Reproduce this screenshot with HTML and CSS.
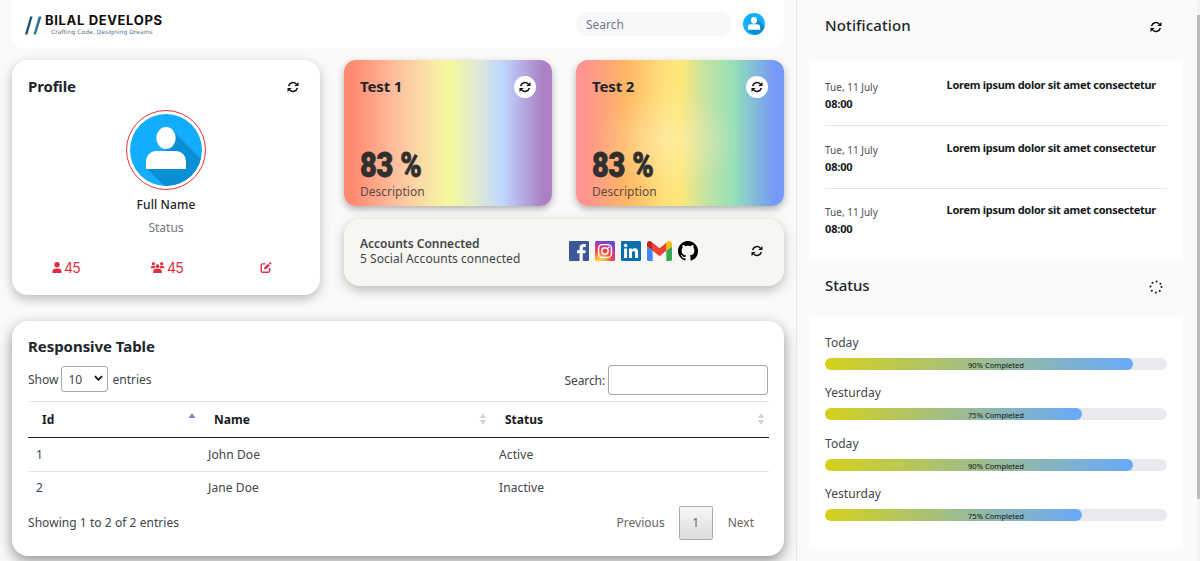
FILE: index.html
```html
<!DOCTYPE html>
<html lang="en">
<head>
  <meta charset="UTF-8" />
  <meta name="viewport" content="width=device-width, initial-scale=1.0"/>
  <title>Dashboard</title>
  <link rel="stylesheet" href="styles.css">
</head>
<body>
  <!-- shared icons -->
  <svg class="sprite" aria-hidden="true">
    <symbol id="refresh" viewBox="0 0 24 24">
      <path d="M3.2 10.2A9 9 0 0 1 18.6 6.2M20.8 13.8A9 9 0 0 1 5.4 17.8" fill="none" stroke="currentColor" stroke-width="3"/>
      <path d="M23 2v8h-8.600zM1 22v-8h8.600z" fill="currentColor"/>
    </symbol>
    <symbol id="avatar" viewBox="0 0 72 72">
      <clipPath id="round"><circle cx="36" cy="36" r="36"/></clipPath>
      <g clip-path="url(#round)">
        <rect width="72" height="72" fill="#12adfe"/>
        <path d="M43 17l35 35v30H45L17 55l20-20z" fill="#0b8fd4"/>
        <ellipse cx="36" cy="24" rx="9.7" ry="11" fill="#fff"/>
        <path d="M16 55V47a10 10 0 0 1 10-10h20a10 10 0 0 1 10 10v8z" fill="#fff"/>
      </g>
    </symbol>
    <symbol id="sort" viewBox="0 0 8 12">
      <path d="M4 0l3.200 5H.8zM4 12l3.200-5H.8z" fill="#d5d5d5"/>
    </symbol>
  </svg>

  <div class="page">
    <main class="main">
      <nav class="navbar">
        <div class="logo">
          <svg class="logo-mark" viewBox="0 0 18 20"><path d="M0 20L5.500 1H8L2.500 20z" fill="#1c4f74"/><path d="M9 20L14.500 1H17.500L11.500 20z" fill="#2b6f92"/></svg>
          <div class="logo-text">
            <span class="logo-name">BILAL DEVELOPS</span>
            <span class="logo-tag">Crafting Code, Designing Dreams</span>
          </div>
        </div>
        <input class="nav-search" type="text" placeholder="Search">
        <svg class="nav-avatar"><use href="#avatar"/></svg>
      </nav>

      <div class="widgets">
        <section class="card profile">
          <div class="card-head">
            <h2>Profile</h2>
            <button class="btn-refresh"><svg><use href="#refresh"/></svg></button>
          </div>
          <div class="avatar-ring"><svg><use href="#avatar"/></svg></div>
          <p class="full-name">Full Name</p>
          <p class="user-status">Status</p>
          <div class="stats">
            <span><svg class="icon-user" viewBox="0 0 10 12"><circle cx="5" cy="3" r="2.900"/><path d="M0 12v-1.500C0 8.200 1.600 7 3.700 7h2.600C8.400 7 10 8.200 10 10.500V12z"/></svg>45</span>
            <span><svg class="icon-users" viewBox="0 0 15 12"><circle cx="3" cy="1.800" r="1.700"/><circle cx="12" cy="1.800" r="1.700"/><circle cx="7.500" cy="4.500" r="2.100"/><path d="M0 6.800C0 5.200 1 4.200 2.400 4.200h1.900c.2 1.200.4 1.800 1 2.600zM15 6.800c0-1.600-1-2.600-2.400-2.600h-1.900c-.2 1.200-.4 1.800-1 2.600zM2.800 12v-1.300C2.800 8.600 4 7.400 6 7.400h3c2 0 3.200 1.200 3.200 3.300V12z"/></svg>45</span>
            <span><svg class="icon-edit" viewBox="0 0 12 12"><path d="M5.500 2H2.200A1.400 1.400 0 0 0 .8 3.400v6.400a1.400 1.400 0 0 0 1.400 1.400h6.400A1.400 1.400 0 0 0 10 9.800V6.600" fill="none" stroke="currentColor" stroke-width="1.500"/><path d="M3.700 8.300l.6-2.500 4-4 1.900 1.900-4 4zM8.900 1.200l.7-.7a1 1 0 0 1 1.400 0l.5.500a1 1 0 0 1 0 1.400l-.7.7z"/></svg></span>
          </div>
        </section>

        <section class="card test test-one">
          <div class="card-head">
            <h2>Test 1</h2>
            <button class="btn-refresh"><svg><use href="#refresh"/></svg></button>
          </div>
          <p class="percent">83 %</p>
          <p class="description">Description</p>
        </section>

        <section class="card test test-two">
          <div class="card-head">
            <h2>Test 2</h2>
            <button class="btn-refresh"><svg><use href="#refresh"/></svg></button>
          </div>
          <p class="percent">83 %</p>
          <p class="description">Description</p>
        </section>

        <section class="card accounts">
          <div class="accounts-text">
            <strong>Accounts Connected</strong>
            <span>5 Social Accounts connected</span>
          </div>
          <div class="socials">
            <svg width="20" height="20" viewBox="0 0 20 20"><rect width="20" height="20" rx="1" fill="#3b5998"/><path d="M13.700 20v-7.700h2.600l.4-3h-3V7.400c0-.9.3-1.500 1.500-1.500h1.600V3.200c-.3 0-1.200-.1-2.300-.1-2.300 0-3.900 1.400-3.900 4v2.200H8v3h2.600V20z" fill="#fff"/></svg>
            <svg width="20" height="20" viewBox="0 0 20 20">
              <radialGradient id="insta" cx=".28" cy="1.050" r="1.100"><stop offset="0" stop-color="#ffdc60"/><stop offset=".25" stop-color="#ffb04a"/><stop offset=".5" stop-color="#f8483f"/><stop offset=".75" stop-color="#c837a0"/><stop offset="1" stop-color="#5b4ddb"/></radialGradient>
              <rect width="20" height="20" rx="1.500" fill="url(#insta)"/><rect x="3.600" y="3.600" width="12.800" height="12.800" rx="3.700" fill="none" stroke="#fff" stroke-width="1.400"/><circle cx="10" cy="10" r="3.200" fill="none" stroke="#fff" stroke-width="1.400"/><circle cx="13.700" cy="6.300" r=".9" fill="#fff"/>
            </svg>
            <svg width="20" height="20" viewBox="0 0 20 20"><rect width="20" height="20" rx="1.200" fill="#0a6fae"/><circle cx="4.600" cy="4.500" r="1.800" fill="#fff"/><path d="M3.100 7.500h3V17h-3zM8 7.500h2.800v1.300c.5-.9 1.500-1.500 2.900-1.500 2.800 0 3.400 1.800 3.400 4.400V17h-3v-4.600c0-1.200 0-2.500-1.500-2.500S11 11 11 12.300V17H8z" fill="#fff"/></svg>
            <svg width="25" height="20" viewBox="52 42 88 66" preserveAspectRatio="none"><path fill="#4285f4" d="M58 108h14V74L52 59v43c0 3.320 2.690 6 6 6"/><path fill="#34a853" d="M120 108h14c3.320 0 6-2.690 6-6V59l-20 15"/><path fill="#fbbc04" d="M120 48v26l20-15v-8c0-7.420-8.470-11.650-14.400-7.200"/><path fill="#ea4335" d="M72 74V48l24 18 24-18v26L96 92"/><path fill="#c5221f" d="M52 51v8l20 15V48l-5.600-4.200c-5.940-4.450-14.400-.22-14.400 7.200"/></svg>
            <svg width="20" height="20" viewBox="0 0 16 16"><path d="M8 0C3.580 0 0 3.580 0 8c0 3.540 2.290 6.530 5.470 7.590.4.070.55-.17.55-.38 0-.19-.01-.82-.01-1.490-2.010.37-2.530-.49-2.690-.94-.09-.23-.48-.94-.82-1.130-.28-.15-.68-.52-.01-.53.63-.01 1.080.58 1.230.82.72 1.210 1.870.87 2.330.66.070-.52.280-.87.510-1.070-1.780-.2-3.640-.89-3.640-3.950 0-.87.310-1.590.82-2.150-.08-.2-.36-1.020.080-2.120 0 0 .67-.21 2.200.82.640-.18 1.320-.27 2-.27s1.360.090 2 .27c1.530-1.040 2.200-.82 2.200-.82.440 1.100.160 1.920.080 2.120.510.560.820 1.270.820 2.150 0 3.070-1.870 3.750-3.650 3.950.290.250.540.730.540 1.480 0 1.070-.01 1.930-.01 2.200 0 .210.150.460.550.380A8 8 0 0 0 16 8c0-4.420-3.580-8-8-8"/></svg>
          </div>
          <button class="btn-refresh"><svg><use href="#refresh"/></svg></button>
        </section>
      </div>

      <section class="card table-card">
        <h2>Responsive Table</h2>
        <div class="table-tools">
          <label class="length">Show <span class="select">10 <svg viewBox="0 0 10 6"><path d="M1 1l4 4 4-4" fill="none" stroke="#111" stroke-width="2"/></svg></span> entries</label>
          <label class="filter">Search: <input type="text"></label>
        </div>
        <table>
          <thead>
            <tr>
              <th class="col-id"><div>Id <svg viewBox="0 0 8 12"><path d="M4 0l3.500 5H.5z" fill="#8681cf"/></svg></div></th>
              <th class="col-name"><div>Name <svg><use href="#sort"/></svg></div></th>
              <th><div>Status <svg><use href="#sort"/></svg></div></th>
            </tr>
          </thead>
          <tbody>
            <tr><td>1</td><td>John Doe</td><td>Active</td></tr>
            <tr><td>2</td><td>Jane Doe</td><td>Inactive</td></tr>
          </tbody>
        </table>
        <div class="table-footer">
          <span class="info">Showing 1 to 2 of 2 entries</span>
          <div class="pagination">
            <a>Previous</a>
            <a class="current">1</a>
            <a>Next</a>
          </div>
        </div>
      </section>
    </main>

    <aside class="sidebar">
      <div class="side-head">
        <h3>Notification</h3>
        <button class="btn-refresh"><svg><use href="#refresh"/></svg></button>
      </div>
      <div class="panel notifications">
        <div class="notice">
          <div><span class="date">Tue, 11 July</span><strong>08:00</strong></div>
          <p>Lorem ipsum dolor sit amet consectetur</p>
        </div>
        <div class="notice">
          <div><span class="date">Tue, 11 July</span><strong>08:00</strong></div>
          <p>Lorem ipsum dolor sit amet consectetur</p>
        </div>
        <div class="notice">
          <div><span class="date">Tue, 11 July</span><strong>08:00</strong></div>
          <p>Lorem ipsum dolor sit amet consectetur</p>
        </div>
      </div>

      <div class="side-head status-head">
        <h3>Status</h3>
        <button class="btn-refresh"><svg class="spinner" viewBox="0 0 14 14"><circle cx="7" cy="7" r="5.500" fill="none" stroke="#111" stroke-width="2" stroke-linecap="round" stroke-dasharray="0 4.320"/></svg></button>
      </div>
      <div class="panel progress-list">
        <p>Today</p>
        <div class="progress"><div class="bar" style="width: 90%"></div><span>90% Completed</span></div>
        <p>Yesturday</p>
        <div class="progress"><div class="bar" style="width: 75%"></div><span>75% Completed</span></div>
        <p>Today</p>
        <div class="progress"><div class="bar" style="width: 90%"></div><span>90% Completed</span></div>
        <p>Yesturday</p>
        <div class="progress"><div class="bar" style="width: 75%"></div><span>75% Completed</span></div>
      </div>
    </aside>
    <div class="scrollbar"><div class="thumb"></div></div>
  </div>
</body>
</html>
```

FILE: styles.css
```css
* {
  box-sizing: border-box;
}

body {
  font-family: "Noto Sans", "Open Sans", sans-serif;
  font-size: 12px;
  line-height: 15px;
  color: #40454a;
  background-color: #fcfaf9;
  margin: 0;
  overflow: hidden;
}

h2, h3, p {
  margin: 0;
}

h2 {
  font-size: 15px;
  font-weight: 700;
  line-height: 20px;
  letter-spacing: -0.15px;
  color: #20252a;
}

svg {
  display: block;
  flex: none;
}

.sprite {
  position: absolute;
  width: 0;
  height: 0;
}

.page {
  display: flex;
  height: 561px;
}

.main {
  width: 797px;
  padding: 0 12px;
  border-right: 1px solid #e8e6e6;
}

/* Navbar */
.navbar {
  display: flex;
  align-items: center;
  height: 48px;
  padding: 0 19px 0 13px;
  background-color: #fff;
  border-radius: 0 0 12px 12px;
}

.logo {
  display: flex;
  align-items: center;
  gap: 3px;
  margin-right: auto;
  padding-top: 2px;
}

.logo-mark {
  width: 17px;
  height: 20px;
}

.logo-text {
  display: flex;
  flex-direction: column;
}

.logo-name {
  font-family: Inter, sans-serif;
  font-size: 13px;
  font-weight: 700;
  line-height: 13px;
  letter-spacing: 0.65px;
  color: #0c0c0c;
}

.logo-tag {
  padding-left: 6px;
  font-family: "DejaVu Sans", sans-serif;
  font-size: 6px;
  line-height: 9px;
  letter-spacing: 0.05px;
  color: #567286;
}

.nav-search {
  width: 156px;
  height: 24px;
  padding: 0 10px;
  border: none;
  border-radius: 12px;
  background-color: #f7f8fa;
  font: inherit;
}

.nav-search::placeholder {
  color: #757a7f;
}

.nav-avatar {
  width: 22px;
  height: 22px;
  margin-left: 11px;
}

/* Cards */
.widgets {
  display: grid;
  grid-template-columns: 308px 208px 208px;
  grid-template-rows: 146px 67px;
  gap: 13px 24px;
  height: 235px;
  margin-top: 12px;
}

.card {
  padding: 16px;
  border-radius: 16px;
  background-color: #fff;
  box-shadow: 0 4px 12px rgba(0, 0, 0, 0.26);
}

.card-head {
  display: flex;
  align-items: center;
  justify-content: space-between;
  height: 22px;
}

.card-head h2 {
  padding-bottom: 2px;
}

.btn-refresh {
  display: flex;
  align-items: center;
  justify-content: center;
  width: 22px;
  height: 22px;
  padding: 0;
  border: none;
  border-radius: 50%;
  background: none;
  color: #111;
}

.btn-refresh svg {
  width: 12px;
  height: 12px;
}

.btn-refresh .spinner {
  width: 14px;
  height: 14px;
}

.profile {
  display: flex;
  flex-direction: column;
  align-items: center;
  grid-row: span 2;
  height: 235px;
}

.profile .card-head {
  width: 100%;
}

.avatar-ring {
  width: 80px;
  height: 80px;
  margin-top: 12px;
  padding: 3px;
  border: 1px solid #e23434;
  border-radius: 50%;
}

.avatar-ring svg {
  width: 72px;
  height: 72px;
}

.full-name {
  margin-top: 7px;
  font-weight: 550;
  letter-spacing: 0.1px;
  color: #20252a;
}

.user-status {
  margin-top: 8px;
  color: #747b83;
}

.stats {
  display: flex;
  width: 100%;
  margin-top: 25px;
  padding-left: 24px;
  color: #dc2f43;
}

.stats span {
  display: flex;
  align-items: center;
  gap: 2px;
  width: 98px;
  font-family: Inter, sans-serif;
  font-size: 14px;
  letter-spacing: -0.8px;
}

.stats span:nth-child(2) {
  width: 110px;
}

.stats span:last-child {
  width: 12px;
}

.stats svg {
  height: 11px;
  fill: currentColor;
}

.icon-user {
  width: 10px;
}

.icon-users {
  width: 15px;
}

.icon-edit {
  width: 12px;
}

.test {
  border-radius: 12px;
  box-shadow: 0 3px 7px rgba(0, 0, 0, 0.3);
}

.test .btn-refresh {
  background-color: #fff;
}

.test-one {
  background: linear-gradient(90deg, #ff8a70 4%, #ffbf9f 25%, #f9e7a6 42%, #f5f99c 51%, #dce8d5 65%, #bfd7fe 76%, #ab80c4 96%);
}

.test-two {
  background:
    radial-gradient(ellipse at 45% 55%, rgba(255, 240, 190, 0.5), rgba(255, 240, 190, 0) 45%),
    linear-gradient(90deg, #ff9390 4%, #ffb765 24%, #ffdf7a 42%, #fee878 50%, #c5e3a0 62%, #94dfb9 76%, #7599f6 95%);
}

.percent {
  width: max-content;
  margin-top: 52px;
  font-family: Roboto, sans-serif;
  font-size: 35px;
  font-weight: 900;
  line-height: 32px;
  letter-spacing: -0.3px;
  color: #2f2f2f;
  -webkit-text-stroke: 0.8px #2f2f2f;
  transform: scaleX(0.83);
  transform-origin: left;
}

.description {
  margin-top: 2px;
  color: #5c4a45;
}

.accounts {
  display: flex;
  align-items: center;
  grid-column: 2 / 4;
  padding: 0 16px 4px;
  background-color: #f8f6f1;
}

.accounts-text {
  display: flex;
  flex-direction: column;
  width: 209px;
}

.accounts-text span {
  letter-spacing: 0.05px;
}

.accounts-text strong {
  font-weight: 600;
}

.socials {
  display: flex;
  align-items: center;
  gap: 6px;
  margin-right: auto;
}

/* Table */
.table-card {
  height: 235px;
  margin-top: 26px;
  padding-top: 15px;
  box-shadow: 0 5px 14px rgba(0, 0, 0, 0.42);
}

.table-card h2 {
  letter-spacing: -0.05px;
}

.table-tools {
  display: flex;
  justify-content: space-between;
  height: 36px;
  margin-top: 9px;
}

.length, .filter {
  display: flex;
  align-items: center;
  gap: 3px;
}

.length {
  height: 28px;
}

.filter {
  height: 30px;
  letter-spacing: -0.1px;
}

.select {
  display: flex;
  align-items: center;
  justify-content: space-between;
  width: 47px;
  height: 26px;
  margin-right: 1px;
  padding: 1px 4px 0 6px;
  border: 1px solid #aaa;
  border-radius: 3px;
}

.select svg {
  width: 9px;
  height: 6px;
  margin-bottom: 3px;
}

.filter input {
  width: 160px;
  height: 30px;
  border: 1px solid #aaa;
  border-radius: 3px;
}

table {
  width: 741px;
  table-layout: fixed;
  border-collapse: separate;
  border-spacing: 0;
  border-top: 1px solid #e4e4e4;
  letter-spacing: 0.1px;
}

.col-id {
  width: 172px;
}

.col-name {
  width: 291px;
}

th {
  height: 36px;
  padding: 0 4px 0 14px;
  border-bottom: 1px solid #222;
  font-weight: 700;
  letter-spacing: 0;
  text-align: left;
  color: #16191c;
}

th div {
  display: flex;
  align-items: center;
  justify-content: space-between;
}

th svg {
  width: 8px;
  height: 12px;
  margin-bottom: 2px;
}

td {
  height: 33px;
  padding: 0 8px 2px;
}

tbody tr:first-child td {
  height: 34px;
  padding-bottom: 0;
  border-bottom: 1px solid #e4e4e4;
}

.table-footer {
  display: flex;
  justify-content: space-between;
}

.info {
  padding-top: 10px;
  letter-spacing: 0.05px;
}

.pagination {
  display: flex;
  padding-top: 1px;
  line-height: 34px;
  color: #666;
}

.pagination a {
  padding: 0 14px 0 15px;
}

.pagination .current {
  width: 34px;
  height: 34px;
  padding: 0;
  border: 1px solid #aaa;
  border-radius: 2px;
  background: linear-gradient(#f7f7f7, #dcdcdc);
  line-height: 32px;
  text-align: center;
}

/* Sidebar */
.sidebar {
  width: 400px;
  padding: 0 14px 0 12px;
}

.side-head {
  display: flex;
  align-items: center;
  justify-content: space-between;
  height: 60px;
  padding: 0 16px 7px;
}

.side-head h3 {
  padding-bottom: 2px;
  font-size: 15px;
  font-weight: 500;
  letter-spacing: 0.12px;
  color: #20252a;
}

.status-head {
  height: 57px;
  padding-bottom: 1px;
}

.status-head h3 {
  padding-bottom: 3px;
  letter-spacing: -0.1px;
}

.panel {
  padding: 0 16px;
  background-color: #fff;
}

.notifications {
  height: 199px;
}

.notice {
  display: flex;
  justify-content: space-between;
  height: 63px;
  padding: 14px 11px 0 0;
  border-bottom: 1px solid #e3e3e3;
  color: #16191c;
}

.notice:first-child {
  height: 66px;
  padding-top: 17px;
}

.notice:last-child {
  padding-top: 13px;
  border-bottom: none;
}

.notice div {
  display: flex;
  flex-direction: column;
}

.date {
  font-size: 10px;
  line-height: 20px;
  color: #4b5055;
}

.notice strong {
  margin-top: -1px;
  font-size: 11px;
  font-weight: 700;
  letter-spacing: -0.15px;
}

.notice p {
  font-size: 11px;
  font-weight: 700;
  letter-spacing: -0.27px;
}

.progress-list {
  height: 233px;
  padding-top: 19px;
}

.progress-list p {
  line-height: 16px;
  letter-spacing: 0.05px;
}

.progress {
  position: relative;
  height: 12px;
  margin: 7px 0 15.300px;
  border-radius: 6px;
  background-color: #e8eaed;
}

.bar {
  height: 100%;
  border-radius: 6px;
  background: linear-gradient(90deg, #d5d11b, #68a9fd);
}

/* caption lies over the bar */
.progress span {
  position: absolute;
  inset: 0;
  font-size: 7.600px;
  line-height: 14px;
  text-align: center;
  color: #111;
}

.scrollbar {
  width: 3px;
  padding-top: 15px;
  background-color: #f3f3f3;
}

.thumb {
  height: 484px;
  background-color: #bcbcbc;
}
```
